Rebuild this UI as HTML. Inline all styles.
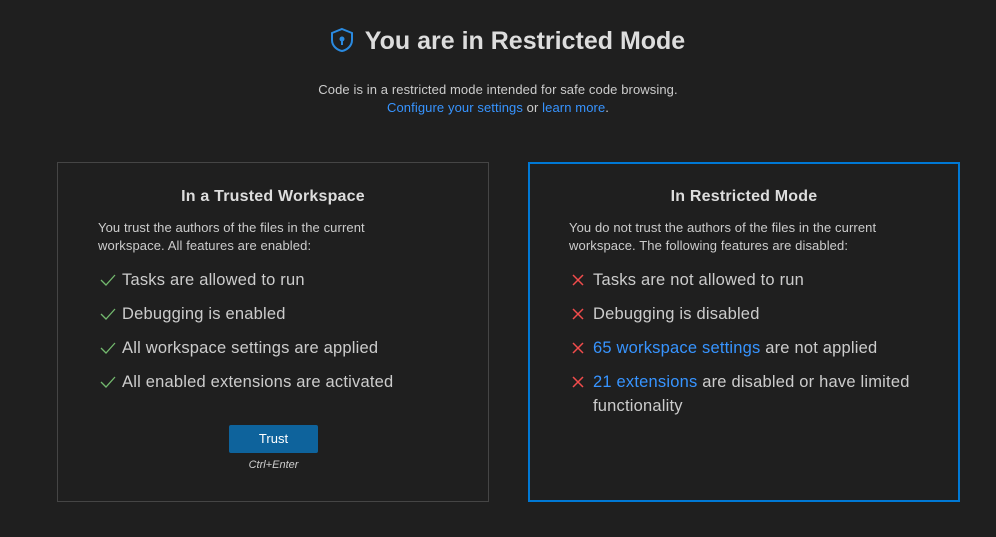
<!DOCTYPE html>
<html><head><style>
body{margin:0;width:996px;height:537px;background:#1f1f1f;font-family:"Liberation Sans",sans-serif;color:#ccc;position:relative;overflow:hidden}
.a{position:absolute}
.t{left:0;width:996px;text-align:center}
a{color:#3794ff;text-decoration:none}
.box{position:absolute;top:162px;height:340px;box-sizing:border-box}
.h{position:absolute;left:0;right:0;top:25px;text-align:center;font-weight:bold;font-size:16px;color:#ddd;letter-spacing:0.2px}
.d{position:absolute;left:40px;top:56px;font-size:13px;line-height:18px;width:310px;letter-spacing:0.1px}
.li{position:absolute;left:40px;font-size:16.5px;color:#ccc;line-height:24px;letter-spacing:0.2px}
.li svg{position:absolute;left:2px;top:5px}
.li span.x{display:block;padding-left:24px;width:330px}
</style></head><body>
<div class="a t" style="top:25px;font-size:25px;font-weight:bold;color:#ddd;line-height:32px;padding-left:18px;box-sizing:border-box">
<svg width="26" height="26" viewBox="0 0 26 26" style="vertical-align:-4px;margin-right:10px"><path d="M13 2 L23 6 V13 C23 19 18 23 13 24 C8 23 3 19 3 13 V6 Z" fill="none" stroke="#2a8ae0" stroke-width="2"/><circle cx="13" cy="12" r="2.5" fill="#2a8ae0"/><rect x="12" y="12" width="2" height="6" fill="#2a8ae0"/></svg>You are in Restricted Mode</div>
<div class="a t" style="top:81px;font-size:13px;line-height:18px;letter-spacing:0.1px">Code is in a restricted mode intended for safe code browsing.<br><a>Configure your settings</a> or <a>learn more</a>.</div>

<div class="box" style="left:57px;width:432px;border:1px solid #454545">
<div class="h">In a Trusted Workspace</div>
<div class="d">You trust the authors of the files in the current workspace. All features are enabled:</div>
<div class="li" style="top:105px"><svg width="16" height="14"><path d="M1 7 L6 12 L15 2" stroke="#73b96e" stroke-width="1.3" fill="none"/></svg><span class="x">Tasks are allowed to run</span></div>
<div class="li" style="top:139px"><svg width="16" height="14"><path d="M1 7 L6 12 L15 2" stroke="#73b96e" stroke-width="1.3" fill="none"/></svg><span class="x">Debugging is enabled</span></div>
<div class="li" style="top:173px"><svg width="16" height="14"><path d="M1 7 L6 12 L15 2" stroke="#73b96e" stroke-width="1.3" fill="none"/></svg><span class="x">All workspace settings are applied</span></div>
<div class="li" style="top:207px"><svg width="16" height="14"><path d="M1 7 L6 12 L15 2" stroke="#73b96e" stroke-width="1.3" fill="none"/></svg><span class="x">All enabled extensions are activated</span></div>
<div class="a" style="left:171px;top:262px;width:89px;height:28px;background:#0e639c;border-radius:2px;color:#fff;font-size:13px;text-align:center;line-height:28px">Trust</div>
<div class="a" style="left:171px;top:296px;width:89px;text-align:center;font-size:11px;font-style:italic;color:#ccc">Ctrl+Enter</div>
</div>

<div class="box" style="left:528px;width:432px;border:2px solid #0078d4">
<div class="h" style="top:24px">In Restricted Mode</div>
<div class="d" style="left:39px;top:55px">You do not trust the authors of the files in the current workspace. The following features are disabled:</div>
<div class="li" style="left:39px;top:104px"><svg width="14" height="14"><path d="M2 2 L12 12 M12 2 L2 12" stroke="#f14c4c" stroke-width="1.5"/></svg><span class="x">Tasks are not allowed to run</span></div>
<div class="li" style="left:39px;top:138px"><svg width="14" height="14"><path d="M2 2 L12 12 M12 2 L2 12" stroke="#f14c4c" stroke-width="1.5"/></svg><span class="x">Debugging is disabled</span></div>
<div class="li" style="left:39px;top:172px"><svg width="14" height="14"><path d="M2 2 L12 12 M12 2 L2 12" stroke="#f14c4c" stroke-width="1.5"/></svg><span class="x"><a>65 workspace settings</a> are not applied</span></div>
<div class="li" style="left:39px;top:206px"><svg width="14" height="14"><path d="M2 2 L12 12 M12 2 L2 12" stroke="#f14c4c" stroke-width="1.5"/></svg><span class="x" style="width:330px"><a>21 extensions</a> are disabled or have limited functionality</span></div>
</div>
</body></html>
